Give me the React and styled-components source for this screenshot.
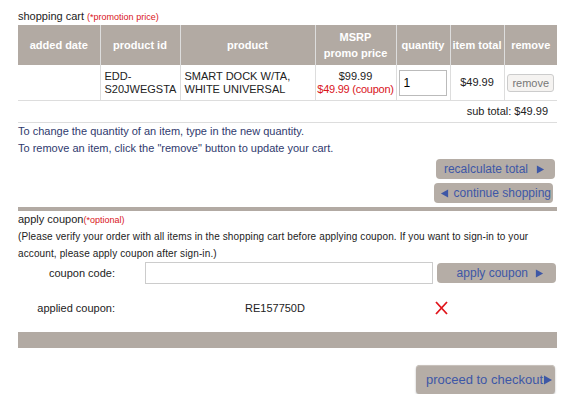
import React from 'react';
import styled, { createGlobalStyle } from 'styled-components';

const GlobalStyle = createGlobalStyle`
  body {
    margin: 0;
    background: #fff;
    font-family: "Liberation Sans", Arial, sans-serif;
    color: #222;
  }
`;

const Page = styled.div`
  width: 539px;
  padding: 8px 0 0 18px;
  font-size: 11px;
`;

const Title = styled.div`
  font-size: 11px;
  color: #222;
  height: 17px;
  line-height: 17px;
`;

const Note = styled.span`
  color: #d9141b;
  font-size: 9px;
`;

const Table = styled.table`
  width: 539px;
  border-collapse: collapse;
  table-layout: fixed;
`;

const Th = styled.th`
  background: #b2aaa3;
  color: #fff;
  font-weight: bold;
  font-size: 11px;
  height: 40px;
  padding: 0;
  text-align: center;
  line-height: 16px;
  white-space: nowrap;
  border-left: 1px solid #ddd;
  &:first-child {
    border-left: none;
  }
`;

const Td = styled.td`
  height: 35px;
  padding: 0 0 0 ${({ $pad }) => $pad || 0}px;
  text-align: ${({ $align }) => $align || 'center'};
  font-size: 11px;
  line-height: 13px;
  color: #222;
  white-space: nowrap;
  border-left: 1px solid #ddd;
  border-bottom: 1px solid #ddd;
  &:first-child {
    border-left: none;
  }
`;

const Red = styled.span`
  color: #d9141b;
  letter-spacing: -0.25px;
`;

const QtyInput = styled.input`
  box-sizing: border-box;
  width: 48px;
  height: 26px;
  margin-left: 2px;
  border: 1px solid #bbb;
  font-family: inherit;
  font-size: 12px;
  padding: 0 4px;
  display: block;
`;

const RemoveButton = styled.button`
  width: 47px;
  height: 18px;
  border: 1px solid #ccc;
  border-radius: 3px;
  background: #f5f3f1;
  color: #777;
  font-family: inherit;
  font-size: 11px;
  padding: 0;
`;

const SubTotal = styled.div`
  text-align: right;
  padding-right: 9px;
  height: 21px;
  line-height: 21px;
  border-bottom: 1px solid #ddd;
`;

const Help = styled.div`
  color: #2f3a6e;
  line-height: 17px;
`;

const ButtonStack = styled.div`
  display: flex;
  flex-direction: column;
  align-items: flex-end;
  gap: 4px;
  padding: 2px 2px 4px 0;
`;

const ActionButton = styled.button`
  box-sizing: border-box;
  width: ${({ $w }) => $w}px;
  height: ${({ $h }) => $h || 20}px;
  margin-right: ${({ $mr }) => $mr || 0}px;
  display: flex;
  align-items: center;
  justify-content: flex-end;
  gap: ${({ $gap }) => $gap || 0}px;
  background: #b5ada6;
  border: none;
  border-radius: 4px;
  color: #3d57a6;
  font-family: inherit;
  font-size: ${({ $fs }) => $fs || 12}px;
  padding: 0 ${({ $pr }) => $pr || 8}px 0 0;
  box-shadow: ${({ $shadow }) => ($shadow ? '0 1px 2px rgba(0,0,0,0.3), inset 0 1px 0 #c8c1bb' : 'none')};
  white-space: nowrap;
`;

const Bar = styled.div`
  background: #b2aaa3;
  height: ${({ $h }) => $h}px;
`;

const CouponTitle = styled.div`
  line-height: 16px;
  color: #222;
`;

const Para = styled.div`
  font-size: 10px;
  letter-spacing: 0.12px;
  line-height: 17px;
  color: #222;
`;

const CouponGrid = styled.div`
  display: grid;
  grid-template-columns: 97px 288px 120px;
  column-gap: 30px;
  align-items: center;
`;

const Label = styled.div`
  text-align: right;
  font-size: 11px;
  color: #222;
`;

const CodeInput = styled.input`
  box-sizing: border-box;
  width: 288px;
  height: 22px;
  border: 1px solid #ccc;
  margin: 0;
`;

const CouponCell = styled.div`
  margin-left: -26px;
  display: flex;
  align-items: center;
`;

const AppliedCell = styled.div`
  height: 48px;
  display: flex;
  align-items: center;
  justify-content: ${({ $end }) => ($end ? 'flex-end' : 'flex-start')};
  padding-left: ${({ $pl }) => $pl || 0}px;
  margin-left: ${({ $ml }) => $ml || 0}px;
`;

const Footer = styled.div`
  display: flex;
  justify-content: flex-end;
  padding: 17px 2px 0 0;
`;

const Arrow = ({ left, size = 9 }) => (
  <svg width={size} height={size} viewBox="0 0 10 10">
    <path d={left ? 'M9 0.5 L1 5 L9 9.5 Z' : 'M1 0.5 L9 5 L1 9.5 Z'} fill="#3d57a6" />
  </svg>
);

const RemoveX = () => (
  <svg width="13" height="14" viewBox="0 0 13 14">
    <path d="M1 1 L12 13 M12 1 L1 13" stroke="#e0141b" strokeWidth="1.8" fill="none" />
  </svg>
);

export default function App() {
  return (
    <>
      <GlobalStyle />
      <Page>
        <Title>
          shopping cart <Note>(*promotion price)</Note>
        </Title>
        <Table>
          <colgroup>
            <col style={{ width: 82 }} />
            <col style={{ width: 80 }} />
            <col style={{ width: 135 }} />
            <col style={{ width: 81 }} />
            <col style={{ width: 54 }} />
            <col style={{ width: 54 }} />
            <col style={{ width: 53 }} />
          </colgroup>
          <thead>
            <tr>
              <Th>added date</Th>
              <Th>product id</Th>
              <Th>product</Th>
              <Th>MSRP<br />promo price</Th>
              <Th>quantity</Th>
              <Th>item total</Th>
              <Th>remove</Th>
            </tr>
          </thead>
          <tbody>
            <tr>
              <Td />
              <Td $align="left" $pad={4}>EDD-<br />S20JWEGSTA</Td>
              <Td $align="left" $pad={4}>SMART DOCK W/TA,<br />WHITE UNIVERSAL</Td>
              <Td>$99.99<br /><Red>$49.99 (coupon)</Red></Td>
              <Td><QtyInput defaultValue="1" /></Td>
              <Td>$49.99</Td>
              <Td><RemoveButton>remove</RemoveButton></Td>
            </tr>
          </tbody>
        </Table>
        <SubTotal>sub total: $49.99</SubTotal>
        <Help>
          To change the quantity of an item, type in the new quantity.<br />
          To remove an item, click the "remove" button to update your cart.
        </Help>
        <ButtonStack>
          <ActionButton $w={119} $pr={10} $gap={8}>
            recalculate total<Arrow />
          </ActionButton>
          <ActionButton $w={119} $mr={2} $pr={2} $gap={5}>
            <Arrow left />continue shopping
          </ActionButton>
        </ButtonStack>
        <Bar $h={4} />
        <CouponTitle>
          apply coupon<Note>(*optional)</Note>
        </CouponTitle>
        <Para>
          (Please verify your order with all items in the shopping cart before applying coupon. If you want to sign-in to your account, please apply coupon after sign-in.)
        </Para>
        <CouponGrid>
          <Label>coupon code:</Label>
          <CodeInput />
          <CouponCell>
            <ActionButton $w={119} $pr={12} $gap={7}>
              apply coupon<Arrow />
            </ActionButton>
          </CouponCell>
          <AppliedCell $end>applied coupon:</AppliedCell>
          <AppliedCell $pl={100}>RE157750D</AppliedCell>
          <AppliedCell $ml={-28}><RemoveX /></AppliedCell>
        </CouponGrid>
        <Bar $h={16} />
        <Footer>
          <ActionButton $w={139} $h={29} $fs={13} $pr={2} $shadow>
            proceed to checkout<Arrow size={10} />
          </ActionButton>
        </Footer>
      </Page>
    </>
  );
}
